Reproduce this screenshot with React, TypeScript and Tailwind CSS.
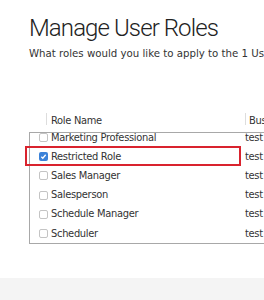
import React from 'react';

const roles = [
  { name: 'Marketing Professional', checked: false },
  { name: 'Restricted Role', checked: true },
  { name: 'Sales Manager', checked: false },
  { name: 'Salesperson', checked: false },
  { name: 'Schedule Manager', checked: false },
  { name: 'Scheduler', checked: false },
];

const Checkbox: React.FC<{ checked: boolean }> = ({ checked }) =>
  checked ? (
    <span className="w-[9px] h-[9px] rounded-[2px] bg-[#3b82d9] flex items-center justify-center shrink-0">
      <svg width="7" height="7" viewBox="0 0 8 8">
        <path d="M1.5 4.2 L3.2 5.9 L6.5 2" fill="none" stroke="white" strokeWidth="1.5" />
      </svg>
    </span>
  ) : (
    <span className="w-[9px] h-[9px] rounded-[2px] border border-[#c4c4c4] bg-white shrink-0" />
  );

export default function App() {
  return (
    <div className="w-[264px] h-[300px] bg-white overflow-hidden flex flex-col text-[#333]">
      <div className="pl-[29px] pt-[13px] flex-1">
        <h1 className="text-[24px] leading-[30px] tracking-[-0.9px] font-['Roboto',sans-serif] font-light text-[#222] whitespace-nowrap">
          Manage User Roles
        </h1>
        <p className="mt-[3px] text-[11.35px] leading-[14px] font-['DejaVu_Sans_Condensed','DejaVu_Sans',sans-serif] whitespace-nowrap">
          What roles would you like to apply to the 1 Users?
        </p>

        {/* roles table */}
        <div className="relative mt-[51px] w-[260px] font-['DejaVu_Sans_Condensed','DejaVu_Sans',sans-serif] text-[11px] tracking-[-0.3px]">
          <div className="flex h-[21px] items-start pt-[2px]">
            <div className="w-[18px] h-[12px] border-r border-[#ddd]" />
            <div className="pl-[4px] w-[198px] leading-[14px] mt-[1px]">Role Name</div>
            <div className="h-[12px] border-l border-[#ddd]" />
            <div className="pl-[3px] leading-[14px] mt-[1px]">Bus</div>
          </div>
          <div className="border border-[#a8a8a8] border-r-0 overflow-hidden">
            <div className="-mt-[5px]">
              {roles.map((r) => (
                <div key={r.name} className="flex items-center h-[19.2px] leading-[14px]">
                  <div className="w-[21px] pl-[9px] flex items-center">
                    <Checkbox checked={r.checked} />
                  </div>
                  <div className="w-[194px]">{r.name}</div>
                  <div>test</div>
                </div>
              ))}
            </div>
          </div>
          <div className="absolute left-[-4px] top-[35px] w-[216px] h-[20px] border-2 border-[#d9232e]" />
        </div>
      </div>
      <div className="h-[22px] bg-[#f4f4f4]" />
    </div>
  );
}
